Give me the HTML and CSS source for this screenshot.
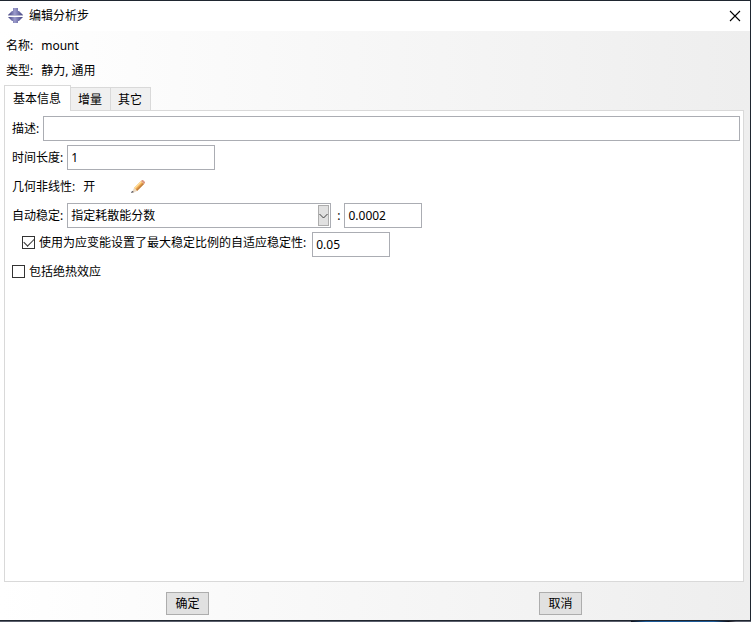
FILE: index.html
```html
<!DOCTYPE html>
<html lang="zh-CN">
<head>
<meta charset="utf-8">
<title>编辑分析步</title>
<link rel="stylesheet" href="styles.css">
</head>
<body>
<main class="window">
  <header class="titlebar">
    <svg class="logo" viewBox="0 0 16 16" aria-hidden="true">
      <defs>
        <linearGradient id="steel" x1="0" x2="1" y1="0" y2="0">
          <stop offset="0" stop-color="#404080"/>
          <stop offset="0.45" stop-color="#9c9ccc"/>
          <stop offset="1" stop-color="#404080"/>
        </linearGradient>
      </defs>
      <path fill="url(#steel)" d="M5 0h5v3h1l4 4H0l4-4h1z"/>
      <path fill="url(#steel)" d="M0 9h15l-4 4h-1v2H5v-2H4z"/>
      <path fill="#b8b8d0" d="M0 7h15v1H0z"/>
    </svg>
    <h1 class="title">编辑分析步</h1>
    <button class="close" type="button" aria-label="关闭">
      <svg viewBox="0 0 10 10" aria-hidden="true"><path d="M0 0l10 10M10 0L0 10" fill="none" stroke="#000" stroke-width="1.1"/></svg>
    </button>
  </header>
  <form class="content">
    <dl class="summary">
      <div class="fact"><dt>名称:</dt><dd>mount</dd></div>
      <div class="fact"><dt>类型:</dt><dd>静力, 通用</dd></div>
    </dl>
    <div class="tabs" role="tablist">
      <button class="tab tab-active" type="button" role="tab" aria-selected="true">基本信息</button>
      <button class="tab" type="button" role="tab" aria-selected="false">增量</button>
      <button class="tab" type="button" role="tab" aria-selected="false">其它</button>
    </div>
    <section class="panel" role="tabpanel">
      <div class="row">
        <label for="description">描述:</label>
        <input class="field field-fill" id="description" type="text">
      </div>
      <div class="row">
        <label for="period">时间长度:</label>
        <input class="field field-wide" id="period" type="text" value="1">
      </div>
      <div class="row">
        <span>几何非线性:</span>
        <span class="state">开</span>
        <button class="edit" type="button" aria-label="编辑">
          <svg viewBox="0 0 14 14" aria-hidden="true">
            <path fill="#f0a850" d="M3 8l7-7 3 3-7 7z"/>
            <path fill="#ffe09c" d="M3 8l7-7 1 1-7 7z"/>
            <path fill="#c08040" d="M5 10l7-7 1 1-7 7z"/>
            <path fill="#dc9880" d="M10 1l1-1h1l2 2v1l-1 1z"/>
            <path fill="#ead9c4" d="M3 8l3 3-4 2-1-1z"/>
            <path fill="#40404c" d="M1 11l2 1-3 1z"/>
          </svg>
        </button>
      </div>
      <div class="row">
        <label for="stabilization">自动稳定:</label>
        <span class="combo">
          <select class="field combo-select" id="stabilization">
            <option>指定耗散能分数</option>
          </select>
          <span class="combo-arrow">
            <svg viewBox="0 0 9 6" aria-hidden="true"><path d="M.5 1l4 4 4-4" fill="none" stroke="#404040"/></svg>
          </span>
        </span>
        <label class="separator" for="fraction">:</label>
        <input class="field field-short" id="fraction" type="text" value="0.0002">
      </div>
      <div class="row row-nested">
        <span class="option">
          <input class="check" id="adaptive" type="checkbox" checked>
          <label for="adaptive">使用为应变能设置了最大稳定比例的自适应稳定性:</label>
        </span>
        <input class="field field-short field-ratio" type="text" value="0.05" aria-label="最大稳定比例">
      </div>
      <div class="option">
        <input class="check" id="adiabatic" type="checkbox">
        <label for="adiabatic">包括绝热效应</label>
      </div>
    </section>
    <footer class="actions">
      <button class="action" type="button">确定</button>
      <button class="action" type="button">取消</button>
    </footer>
  </form>
</main>
<div class="desktop"></div>
</body>
</html>
```
FILE: styles.css
```css
* {
  box-sizing: border-box;
}

body {
  display: flex;
  flex-direction: column;
  min-height: 100vh;
  margin: 0;
  color: #000;
  font: 12px/16px "Noto Sans", "Noto Sans CJK SC", sans-serif;
}

button,
input,
select {
  margin: 0;
  color: inherit;
  font: inherit;
}

.window {
  display: flex;
  flex: 1;
  flex-direction: column;
  border: solid #1f2630;
  border-width: 1px 1px 1px 0;
}

.titlebar {
  display: flex;
  align-items: center;
  height: 30px;
  padding: 0 10px 0 8px;
  background: #fff;
}

.logo {
  width: 16px;
  height: 16px;
}

.title {
  flex: 1;
  margin: 0 0 0 5px;
  font-size: 12px;
  font-weight: 400;
}

.close,
.edit {
  display: flex;
  padding: 0;
  border: 0;
  background: none;
}

.close svg {
  width: 10px;
  height: 10px;
  overflow: visible;
}

.content {
  display: flex;
  flex: 1;
  flex-direction: column;
  background: linear-gradient(to right, #fff, #eee);
}

.summary {
  display: grid;
  gap: 9px;
  margin: 0;
  padding: 7px 6px 6px;
}

.fact {
  display: flex;
  gap: 8px;
}

.fact dd {
  margin: 0;
}

.tabs {
  display: flex;
  align-items: flex-end;
  padding: 0 4px;
}

.tab {
  height: 23px;
  padding: 1px 8px 0 7px;
  border: solid #d9d9d9;
  border-width: 1px 1px 0 0;
  background: #f0f0f0;
}

.tab-active {
  z-index: 1;
  height: 26px;
  margin-bottom: -1px;
  padding: 0 9px 0 8px;
  border-left-width: 1px;
  background: #fff;
}

.panel {
  display: flex;
  flex: 1;
  flex-direction: column;
  gap: 4px;
  margin: 0 6px 0 4px;
  padding: 5px 3px 5px 7px;
  border: 1px solid #d9d9d9;
  background: #fff;
}

.row,
.option {
  display: flex;
  align-items: center;
  gap: 4px;
}

.row {
  min-height: 25px;
}

.row-nested {
  align-items: flex-start;
  padding-left: 10px;
}

.option {
  min-height: 21px;
}

.field {
  height: 25px;
  padding: 0 3px;
  border: 1px solid #abadb3;
  border-radius: 0;
  background: #fff;
}

.field-fill {
  flex: 1;
  min-width: 0;
}

.field-wide {
  width: 148px;
}

.field-short {
  width: 78px;
}

.field-ratio {
  margin-left: 2px;
}

.state {
  margin-left: 4px;
}

.edit {
  margin-left: 32px;
}

.edit svg {
  width: 14px;
  height: 14px;
}

.combo {
  position: relative;
  width: 264px;
}

.combo-select {
  display: block;
  width: 100%;
  appearance: none;
}

.combo-arrow {
  position: absolute;
  top: 2px;
  right: 2px;
  bottom: 2px;
  display: flex;
  align-items: center;
  justify-content: center;
  width: 11px;
  border: 1px solid #adadad;
  background: #e1e1e1;
  pointer-events: none;
}

.combo-arrow svg {
  flex: none;
  width: 9px;
  height: 6px;
}

.separator {
  margin-left: 2px;
}

.check {
  display: grid;
  place-items: center;
  width: 13px;
  height: 13px;
  border: 1px solid #333;
  background: #fff;
  appearance: none;
}

.check:checked::before {
  width: 9px;
  height: 5px;
  margin-bottom: 3px;
  border: solid #333;
  border-width: 0 0 1px 1px;
  content: "";
  transform: rotate(-45deg);
}

.actions {
  display: grid;
  grid-template-columns: 1fr 1fr;
  justify-items: center;
  padding: 10px 3px 5px 1px;
}

.action {
  height: 23px;
  padding: 0 8px;
  border: 1px solid #adadad;
  background: #e1e1e1;
}

.desktop {
  height: 1px;
  background: linear-gradient(to right, #5a5f6c 84%, #101018 84%, #1c5a98 86%, #1c5a98 95%, #101018 97%, #5a5f6c 98%);
}
```
